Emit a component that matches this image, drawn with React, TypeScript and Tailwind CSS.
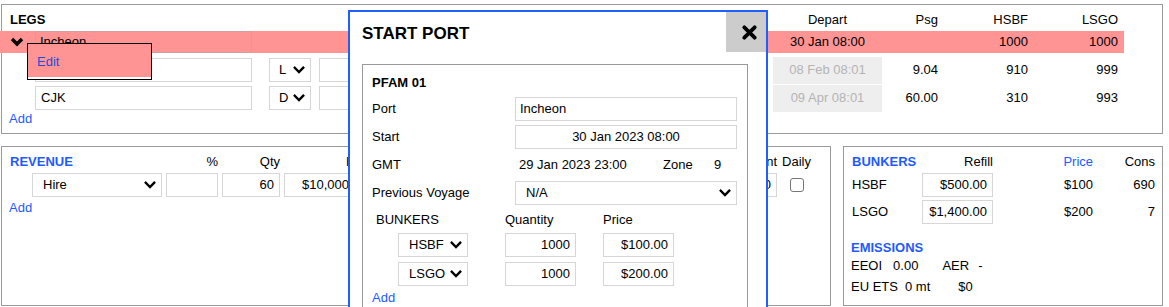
import React from "react"
import clsx from "clsx"

const Chevron = ({ className = "h-[8px] w-[12px]" }: { className?: string }) => (
  <svg viewBox="0 0 12 8" className={className} fill="none" stroke="black" strokeWidth={2.4} strokeLinecap="square">
    <path d="M1.8 1.8 L6 6 L10.2 1.8" />
  </svg>
)

const Field = ({
  className,
  children,
  align = "left",
}: {
  className?: string
  children?: React.ReactNode
  align?: "left" | "right" | "center"
}) => (
  <div
    className={clsx(
      "flex h-[24px] shrink-0 items-center border border-[#d6d6d6] px-[5px] whitespace-nowrap",
      align === "right" && "justify-end",
      align === "center" && "justify-center",
      className
    )}
  >
    {children}
  </div>
)

const SelectBox = ({ className, children }: { className?: string; children?: React.ReactNode }) => (
  <div
    className={clsx(
      "flex h-[24px] shrink-0 items-center justify-between border border-[#d6d6d6] pl-[9px] pr-[5px]",
      className
    )}
  >
    <span>{children}</span>
    <Chevron />
  </div>
)

const LegsPanel = () => (
  <div className="h-[130px] border border-[#9a9a9a]">
    <div className="mr-[38px] mt-[7px] flex h-[16px] items-center pr-[6px]">
      <div className="flex-1 pl-[8px] font-bold">LEGS</div>
      <div className="w-[109px] text-center">Depart</div>
      <div className="w-[56px] text-right">Psg</div>
      <div className="w-[90px] text-right">HSBF</div>
      <div className="w-[90px] text-right">LSGO</div>
    </div>

    <div className="-ml-[2px] mr-[38px] mt-[3px] flex h-[22px] items-center bg-[#ff9494] pl-[2px] pr-[6px]">
      <div className="flex flex-1 items-center">
        <div className="w-[33px] pl-[8px]">
          <svg viewBox="0 0 14 10" className="h-[10px] w-[14px]" fill="none" stroke="black" strokeWidth={3.4}>
            <path d="M2 2 L7 7 L12 2" />
          </svg>
        </div>
        <div className="flex h-[22px] w-[217px] items-center border border-[#d0a0a0] pl-[4px]">Incheon</div>
      </div>
      <div className="w-[109px] text-center">30 Jan 08:00</div>
      <div className="w-[56px]" />
      <div className="w-[90px] text-right">1000</div>
      <div className="w-[90px] text-right">1000</div>
    </div>

    <div className="mr-[38px] mt-[3px] flex h-[28px] items-center pr-[6px]">
      <div className="flex flex-1 items-center pl-[33px]">
        <Field className="w-[217px]" />
        <SelectBox className="ml-[17px] w-[42px]">L</SelectBox>
        <Field className="ml-[8px] w-[100px]" />
      </div>
      <div className="flex h-[27px] w-[109px] items-center justify-center bg-[#eeeeee] text-[#b4b4b4]">08 Feb 08:01</div>
      <div className="w-[56px] text-right">9.04</div>
      <div className="w-[90px] text-right">910</div>
      <div className="w-[90px] text-right">999</div>
    </div>

    <div className="mr-[38px] flex h-[28px] items-center pr-[6px]">
      <div className="flex flex-1 items-center pl-[33px]">
        <Field className="w-[217px]">CJK</Field>
        <SelectBox className="ml-[17px] w-[42px]">D</SelectBox>
        <Field className="ml-[8px] w-[100px]" />
      </div>
      <div className="flex h-[27px] w-[109px] items-center justify-center bg-[#eeeeee] text-[#b4b4b4]">09 Apr 08:01</div>
      <div className="w-[56px] text-right">60.00</div>
      <div className="w-[90px] text-right">310</div>
      <div className="w-[90px] text-right">993</div>
    </div>

    <div className="h-[14px] pl-[7px] leading-[14px] text-[#1d5bff]">Add</div>
  </div>
)

const RevenuePanel = () => (
  <div className="h-[160px] w-[830px] shrink-0 border border-[#9a9a9a]">
    <div className="mt-[7px] flex h-[16px] items-center pl-[8px] pr-[16px]">
      <div className="w-[152px] font-bold text-[#1d5bff]">REVENUE</div>
      <div className="ml-[4px] w-[52px] text-right">%</div>
      <div className="ml-[4px] w-[58px] text-right">Qty</div>
      <div className="ml-[4px] w-[71px] pl-[62px]">Rate</div>
      <div className="flex-1" />
      <div className="w-[70px] text-right">Amount</div>
      <div className="ml-[2px] w-[35px] text-center">Daily</div>
    </div>
    <div className="mt-[3px] flex h-[24px] items-center pl-[30px] pr-[16px]">
      <SelectBox className="w-[130px] pl-[10px]">Hire</SelectBox>
      <Field className="ml-[4px] w-[52px]" />
      <Field className="ml-[4px] w-[58px]" align="right">60</Field>
      <Field className="ml-[4px] w-[71px]" align="right">$10,000</Field>
      <div className="flex-1" />
      <Field className="w-[70px]" align="right">$0</Field>
      <div className="ml-[2px] flex w-[35px] justify-center">
        <div className="h-[14px] w-[14px] rounded-[3px] border border-[#767676] bg-white" />
      </div>
    </div>
    <div className="mt-[3px] h-[16px] pl-[7px] text-[#1d5bff]">Add</div>
  </div>
)

const BunkersPanel = () => (
  <div className="h-[160px] flex-1 border border-[#9a9a9a]">
    <div className="mt-[7px] flex h-[16px] items-center pl-[8px] pr-[7px]">
      <div className="w-[70px] font-bold text-[#1d5bff]">BUNKERS</div>
      <div className="w-[71px] text-right">Refill</div>
      <div className="w-[100px] text-right text-[#1d5bff]">Price</div>
      <div className="flex-1 text-right">Cons</div>
    </div>
    {[
      { name: "HSBF", refill: "$500.00", price: "$100", cons: "690" },
      { name: "LSGO", refill: "$1,400.00", price: "$200", cons: "7" },
    ].map((b) => (
      <div key={b.name} className="mt-[3px] flex h-[24px] items-center pl-[8px] pr-[7px]">
        <div className="w-[70px]">{b.name}</div>
        <Field className="w-[71px]" align="right">
          {b.refill}
        </Field>
        <div className="w-[100px] text-right">{b.price}</div>
        <div className="flex-1 text-right">{b.cons}</div>
      </div>
    ))}
    <div className="mt-[16px] h-[16px] pl-[7px] font-bold text-[#1d5bff]">EMISSIONS</div>
    <div className="flex h-[20px] items-center pl-[7px]">
      <span>EEOI</span>
      <span className="ml-[11px]">0.00</span>
      <span className="ml-[24px]">AER</span>
      <span className="ml-[9px]">-</span>
    </div>
    <div className="flex h-[21px] items-center pl-[7px]">
      <span>EU ETS</span>
      <span className="ml-[7px]">0 mt</span>
      <span className="ml-[28px]">$0</span>
    </div>
  </div>
)

const StartPortModal = () => (
  <div className="absolute left-[348px] top-[10px] h-[310px] w-[420px] border-2 border-[#1f5fff] bg-white">
    <div className="flex h-[40px] items-start justify-between">
      <div className="pl-[12px] pt-[12px] text-[17px] font-bold leading-[20px]">START PORT</div>
      <button className="flex h-[40px] w-[40px] items-center justify-center bg-[#cccccc] pl-[6px]">
        <svg viewBox="0 0 16 16" className="h-[15px] w-[15px]" stroke="black" strokeWidth={4} strokeLinecap="round">
          <path d="M2.5 2.5 L13.5 13.5 M13.5 2.5 L2.5 13.5" />
        </svg>
      </button>
    </div>

    <div className="ml-[12px] mt-[12px] h-[260px] w-[386px] border border-[#9a9a9a] px-[9px] pt-[10px]">
      <div className="h-[16px] font-bold">PFAM 01</div>
      <div className="mt-[3px] flex h-[29px] items-center">
        <div className="w-[143px]">Port</div>
        <Field className="w-[222px] pl-[4px]">Incheon</Field>
      </div>
      <div className="flex h-[28px] items-center">
        <div className="w-[143px]">Start</div>
        <Field className="w-[222px]" align="center">
          30 Jan 2023 08:00
        </Field>
      </div>
      <div className="flex h-[28px] items-center">
        <div className="w-[143px]">GMT</div>
        <div className="flex w-[222px] items-center">
          <span className="w-[148px] pl-[4px]">29 Jan 2023 23:00</span>
          <span className="w-[51px]">Zone</span>
          <span>9</span>
        </div>
      </div>
      <div className="flex h-[28px] items-center">
        <div className="w-[143px]">Previous Voyage</div>
        <SelectBox className="w-[222px] pl-[10px] pr-[4px]">N/A</SelectBox>
      </div>

      <div className="mt-[5px] flex h-[16px] items-center">
        <div className="w-[133px] pl-[4px]">BUNKERS</div>
        <div className="w-[98px]">Quantity</div>
        <div>Price</div>
      </div>
      {[
        { name: "HSBF", qty: "1000", price: "$100.00" },
        { name: "LSGO", qty: "1000", price: "$200.00" },
      ].map((b) => (
        <div key={b.name} className="mt-[5px] flex h-[24px] items-center">
          <SelectBox className="ml-[26px] w-[70px] pl-[10px]">{b.name}</SelectBox>
          <Field className="ml-[37px] w-[71px]" align="right">
            {b.qty}
          </Field>
          <Field className="ml-[27px] w-[71px]" align="right">
            {b.price}
          </Field>
        </div>
      ))}
      <div className="mt-[4px] h-[16px] text-[#1d5bff]">Add</div>
    </div>
  </div>
)

export default function App() {
  return (
    <div className="relative h-[307px] overflow-hidden bg-white pl-px pr-[6px] pt-1 font-['Liberation_Sans',Arial,sans-serif] text-[13px] leading-[16px] text-black">
      <LegsPanel />
      <div className="mt-[12px] flex gap-[12px]">
        <RevenuePanel />
        <BunkersPanel />
      </div>

      <div className="absolute left-[27px] top-[43px] flex h-[37px] w-[125px] items-center border border-black bg-[#ff9494] pl-[9px] text-[#1d4fd8] shadow-[inset_0_-2px_0_white]">
        Edit
      </div>

      <StartPortModal />
    </div>
  )
}
